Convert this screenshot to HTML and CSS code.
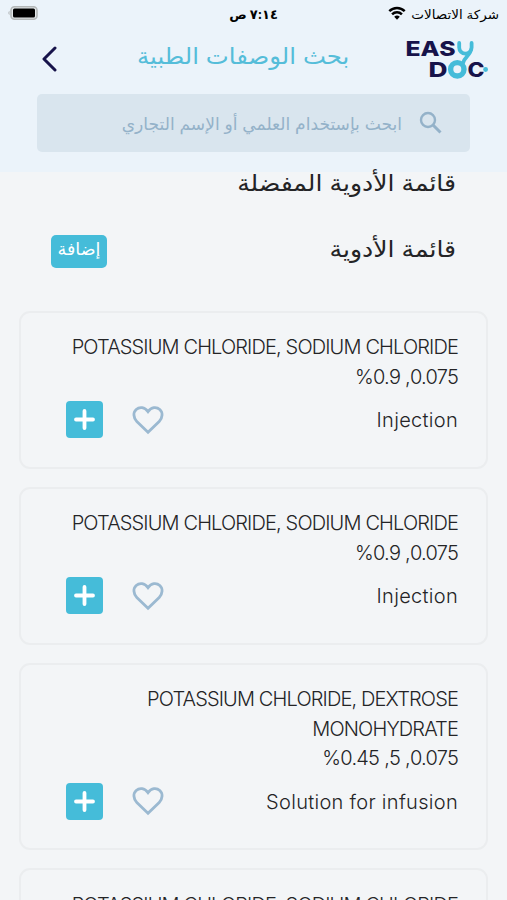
FILE: index.html
```html
<!DOCTYPE html>
<html lang="ar" dir="rtl">
<head>
  <meta charset="UTF-8" />
  <meta name="viewport" content="width=device-width, initial-scale=1" />
  <title>بحث الوصفات الطبية</title>
  <link rel="stylesheet" href="styles.css">
</head>
<body>
  <!-- Shared icons -->
  <svg class="sprite" aria-hidden="true">
    <symbol id="heart" viewBox="0 0 32 30">
      <path d="M16 27.3 L4.8 16.4 C1.2 12.8 1 7.4 4.2 4.5 C7.6 1.4 12.6 2 16 6.6 C19.4 2 24.4 1.4 27.8 4.5 C31 7.4 30.8 12.8 27.2 16.4 Z" fill="none" stroke="#9bb9d1" stroke-width="2.8" />
    </symbol>
    <symbol id="plus" viewBox="0 0 37 37">
      <path d="M18.5 10v17M10 18.5h17" stroke="#fff" stroke-width="3.8" stroke-linecap="round" />
    </symbol>
  </svg>

  <div class="screen">
    <header class="header">
      <div class="status">
        <div class="carrier">
          <span class="carrier-name">شركة الاتصالات</span>
          <svg class="wifi" viewBox="0 0 18 14">
            <path d="M1.3 5.2 a11 11 0 0 1 15.4 0M4.1 8.3 a7 7 0 0 1 9.8 0" fill="none" stroke="#000" stroke-width="2.5" />
            <path d="M9 13.7 L6.2 10.8 a4 4 0 0 1 5.6 0 Z" />
          </svg>
        </div>
        <span class="time">٧:١٤ ص</span>
        <svg class="battery" viewBox="0 0 30 14">
          <rect x="3" y=".8" width="26" height="12.4" rx="3.5" fill="#e4e8ea" stroke="#b3b7b8" stroke-width="1.6" />
          <rect x="5" y="2.6" width="22" height="8.8" rx="1.5" />
          <path d="M1.5 4.8 a3 3 0 0 0 0 4.4 Z" fill="#b3b7b8" />
        </svg>
      </div>

      <div class="navbar">
        <svg class="logo" viewBox="0 0 84 42" direction="ltr">
          <g class="logo-text">
            <text x="-.5" y="17.6" textLength="50" lengthAdjust="spacingAndGlyphs">EAS</text>
            <text x="22.5" y="38.8" textLength="19" lengthAdjust="spacingAndGlyphs">D</text>
            <text x="61.5" y="38.8" textLength="17" lengthAdjust="spacingAndGlyphs">C</text>
          </g>
          <g fill="none" stroke="#45bcd9" stroke-linecap="round">
            <path d="M53.2 5 v4.5 a6.2 6.2 0 0 0 12.4 0 v-4.5M65.4 10 C65 17 59 18 57 25" stroke-width="3.8" />
            <circle cx="51.3" cy="31.3" r="6.7" stroke-width="5.4" />
          </g>
          <circle cx="79.6" cy="31.5" r="2.4" fill="#45bcd9" />
        </svg>
        <h1 class="title">بحث الوصفات الطبية</h1>
        <svg class="back" viewBox="0 0 16 26">
          <path d="M14 2 L3 13 L14 24" fill="none" stroke="#17134a" stroke-width="3" stroke-linecap="round" stroke-linejoin="round" />
        </svg>
      </div>

      <div class="search">
        <svg class="search-icon" viewBox="0 0 24 24">
          <circle cx="9" cy="9" r="7" fill="none" stroke="#94b2c9" stroke-width="2.4" />
          <path d="M14 14 L21.5 21.5" stroke="#94b2c9" stroke-width="3" />
        </svg>
        <span class="placeholder">ابحث بإستخدام العلمي أو الإسم التجاري</span>
      </div>
    </header>

    <main class="content">
      <h2 class="section-title favorites">قائمة الأدوية المفضلة</h2>
      <div class="section-row">
        <h2 class="section-title">قائمة الأدوية</h2>
        <button class="add-btn">إضافة</button>
      </div>

      <div class="list">
        <div class="card">
          <p class="name">POTASSIUM CHLORIDE, SODIUM CHLORIDE</p>
          <p class="dose">0.075, %0.9</p>
          <div class="card-row">
            <span class="type">Injection</span>
            <svg class="heart"><use href="#heart" /></svg>
            <button class="plus"><svg><use href="#plus" /></svg></button>
          </div>
        </div>

        <div class="card">
          <p class="name">POTASSIUM CHLORIDE, SODIUM CHLORIDE</p>
          <p class="dose">0.075, %0.9</p>
          <div class="card-row">
            <span class="type">Injection</span>
            <svg class="heart"><use href="#heart" /></svg>
            <button class="plus"><svg><use href="#plus" /></svg></button>
          </div>
        </div>

        <div class="card">
          <p class="name">POTASSIUM CHLORIDE, DEXTROSE<br>MONOHYDRATE</p>
          <p class="dose">0.075, 5, %0.45</p>
          <div class="card-row">
            <span class="type">Solution for infusion</span>
            <svg class="heart"><use href="#heart" /></svg>
            <button class="plus"><svg><use href="#plus" /></svg></button>
          </div>
        </div>

        <div class="card">
          <p class="name">POTASSIUM CHLORIDE, SODIUM CHLORIDE</p>
        </div>
      </div>
    </main>
  </div>
</body>
</html>
```
FILE: styles.css
```css
* {
  box-sizing: border-box;
}

body {
  margin: 0;
  background-color: #f3f5f7;
  color: #242426;
  font-family: Inter, "DejaVu Sans", sans-serif;
}

h1, h2, p {
  margin: 0;
}

h1, h2 {
  font-weight: 400;
}

button {
  border: none;
  padding: 0;
  background-color: #45bcd9;
  color: white;
  font-family: inherit;
}

svg {
  display: block;
  flex: none;
}

.sprite {
  width: 0;
  height: 0;
  float: left;
}

.screen {
  height: 900px;
  overflow: hidden;
}

.header {
  height: 172px;
  background-color: #ebf3fa;
}

.status {
  display: grid;
  grid-template-columns: 1fr auto 1fr;
  align-items: center;
  height: 28px;
  padding: 0 8px;
  color: #000;
  white-space: nowrap;
}

.carrier {
  display: flex;
  align-items: center;
  gap: 5px;
}

.carrier-name {
  width: 88px;
  font-size: 12.5px;
  transform: scaleX(1.08);
  transform-origin: right;
}

.wifi {
  width: 18px;
  height: 14px;
  margin-top: -2px;
}

.time {
  font-size: 13px;
  font-weight: 700;
}

.battery {
  width: 30px;
  height: 14px;
  margin-top: -2px;
  justify-self: end;
}

.navbar {
  display: flex;
  align-items: center;
  justify-content: space-between;
  height: 66px;
  padding: 0 17px 4px 41px;
}

.logo {
  width: 84px;
  height: 42px;
  overflow: visible;
}

.logo-text {
  font-family: Inter, sans-serif;
  font-size: 20px;
  font-weight: 800;
  fill: #17134a;
}

.title {
  color: #55bdd9;
  font-size: 23px;
  line-height: 30px;
  margin: -7px 0 0 23px;
  transform: scaleX(1.06);
}

.back {
  width: 16px;
  height: 26px;
}

.search {
  display: flex;
  align-items: center;
  gap: 17px;
  height: 58px;
  margin: 0 37px;
  padding-right: 27px;
  border-radius: 5px;
  background-color: #d9e5ee;
}

.search-icon {
  width: 24px;
  height: 24px;
}

.placeholder {
  color: #94b2c9;
  font-size: 17.1px;
  white-space: nowrap;
}

.section-title {
  font-size: 23px;
  line-height: 30px;
  white-space: nowrap;
  transform: scaleX(1.09);
  transform-origin: right;
}

.favorites {
  margin: -4px 51px 0 0;
}

.section-row {
  display: flex;
  justify-content: space-between;
  height: 34px;
  margin-top: 36px;
  padding: 0 51px;
}

.add-btn {
  width: 56px;
  height: 33px;
  margin-top: 1px;
  padding-bottom: 5px;
  border-radius: 5px;
  font-size: 17.5px;
  line-height: 28px;
}

.list {
  display: flex;
  flex-direction: column;
  gap: 18px;
  margin: 43px 19px 0;
}

.card {
  padding: 20.4px 28px 29px 45px;
  border: 2px solid #ebedef;
  border-radius: 11px;
  font-family: Inter, sans-serif;
  font-size: 20px;
  font-weight: 300;
  line-height: 29.3px;
}

.name {
  letter-spacing: -0.86px;
  white-space: nowrap;
}

.dose {
  letter-spacing: -0.75px;
}

.card-row {
  display: flex;
  align-items: center;
  height: 46px;
  padding-top: 10px;
}

.type {
  margin: 2px 0 0 auto;
  letter-spacing: 0.3px;
}

.heart {
  width: 32px;
  height: 30px;
}

.plus {
  width: 37px;
  height: 37px;
  margin-right: 29px;
  border-radius: 4px;
}

.plus svg {
  width: 37px;
  height: 37px;
}
```
